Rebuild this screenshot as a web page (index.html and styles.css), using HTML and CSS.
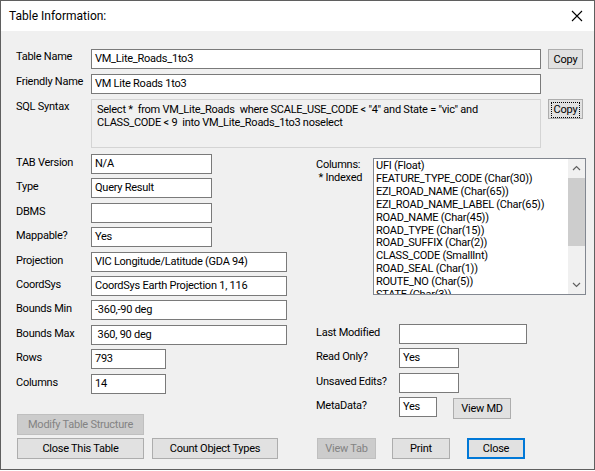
FILE: index.html
```html
<!DOCTYPE html>
<html lang="en">
<head>
    <meta charset="UTF-8">
    <title>Table Information</title>
    <link rel="stylesheet" href="styles.css">
</head>
<body>
    <div class="dialog">
        <div class="titlebar">
            <span class="title">Table Information:</span>
            <svg class="close-x" width="12" height="12" viewBox="0 0 12 12">
                <path d="M1 1 L11 11 M11 1 L1 11" stroke="#000" stroke-width="1.1" fill="none"/>
            </svg>
        </div>
        <div class="content">
            <div class="top">
                <label class="lbl">Table Name</label>
                <div class="field">VM_Lite_Roads_1to3</div>
                <button class="btn copy">Copy</button>

                <label class="lbl">Friendly Name</label>
                <div class="field">VM Lite Roads 1to3</div>
                <span></span>

                <label class="lbl">SQL Syntax</label>
                <div class="sql">Select *&nbsp; from VM_Lite_Roads&nbsp; where SCALE_USE_CODE &lt; "4" and State = "vic" and<br>CLASS_CODE &lt; 9&nbsp; into VM_Lite_Roads_1to3 noselect</div>
                <button class="btn copy focus"><span class="dotted">Copy</span></button>
            </div>

            <div class="middle">
                <div class="left">
                    <div class="rows">
                        <label class="lbl">TAB Version</label><div class="field w120">N/A</div>
                        <label class="lbl">Type</label><div class="field w120">Query Result</div>
                        <label class="lbl">DBMS</label><div class="field w120"></div>
                        <label class="lbl">Mappable?</label><div class="field w120">Yes</div>
                        <label class="lbl">Projection</label><div class="field w195">VIC Longitude/Latitude (GDA 94)</div>
                        <label class="lbl">CoordSys</label><div class="field w195">CoordSys Earth Projection 1, 116</div>
                        <label class="lbl">Bounds Min</label><div class="field w195">-360,-90 deg</div>
                        <label class="lbl">Bounds Max</label><div class="field w195">&nbsp;360, 90 deg</div>
                        <label class="lbl">Rows</label><div class="field w74">793</div>
                        <label class="lbl">Columns</label><div class="field w74">14</div>
                    </div>
                    <button class="btn disabled modify">Modify Table Structure</button>
                </div>

                <div class="right">
                    <div class="columns-block">
                        <div class="col-label">Columns:<br>&nbsp;* Indexed</div>
                        <div class="listbox">
                            <ul class="items">
                                <li>UFI (Float)</li>
                                <li>FEATURE_TYPE_CODE (Char(30))</li>
                                <li>EZI_ROAD_NAME (Char(65))</li>
                                <li>EZI_ROAD_NAME_LABEL (Char(65))</li>
                                <li>ROAD_NAME (Char(45))</li>
                                <li>ROAD_TYPE (Char(15))</li>
                                <li>ROAD_SUFFIX (Char(2))</li>
                                <li>CLASS_CODE (SmallInt)</li>
                                <li>ROAD_SEAL (Char(1))</li>
                                <li>ROUTE_NO (Char(5))</li>
                                <li>STATE (Char(3))</li>
                            </ul>
                            <div class="scrollbar">
                                <svg class="arrow" width="9" height="6" viewBox="0 0 9 6"><path d="M1 5 L4.5 1.5 L8 5" stroke="#606060" stroke-width="1.2" fill="none"/></svg>
                                <div class="track"><div class="thumb"></div></div>
                                <svg class="arrow" width="9" height="6" viewBox="0 0 9 6"><path d="M1 1 L4.5 4.5 L8 1" stroke="#606060" stroke-width="1.2" fill="none"/></svg>
                            </div>
                        </div>
                    </div>
                    <div class="rows right-rows">
                        <label class="lbl">Last Modified</label><div class="field w128"></div>
                        <label class="lbl">Read Only?</label><div class="field w60">Yes</div>
                        <label class="lbl">Unsaved Edits?</label><div class="field w60"></div>
                        <label class="lbl">MetaData?</label>
                        <div class="meta">
                            <div class="field w38">Yes</div>
                            <button class="btn viewmd">View MD</button>
                        </div>
                    </div>
                </div>
            </div>

            <div class="buttons">
                <button class="btn b-close-table">Close This Table</button>
                <button class="btn b-count">Count Object Types</button>
                <button class="btn disabled b-viewtab">View Tab</button>
                <button class="btn b-print">Print</button>
                <button class="btn b-close default">Close</button>
            </div>
        </div>
    </div>
</body>
</html>
```

FILE: styles.css
```css
body {
    margin: 0;
    background-color: #ffffff;
    font-family: "Segoe UI", Roboto, sans-serif;
    font-size: 11px;
    letter-spacing: -0.25px;
    color: #000;
}
.dialog {
    width: 593px;
    height: 468px;
    border: 1px solid #5f5f5f;
    background-color: #f0f0f0;
    display: flex;
    flex-direction: column;
}
.titlebar {
    height: 30px;
    background-color: #ffffff;
    display: flex;
    align-items: center;
    justify-content: space-between;
    padding: 0 11px 0 8px;
}
.title {
    font-size: 12px;
    letter-spacing: 0;
}
.close-x {
    display: block;
}
.content {
    padding: 18px 0 0 15px;
}
.lbl {
    line-height: 15px;
    white-space: nowrap;
}
.field {
    box-sizing: border-box;
    height: 20px;
    background-color: #fff;
    border: 1px solid #7a7a7a;
    padding: 0 3px;
    line-height: 17px;
    white-space: nowrap;
    overflow: hidden;
}
.btn {
    box-sizing: border-box;
    font-family: inherit;
    font-size: 11px;
    letter-spacing: -0.25px;
    color: #000;
    background-color: #e1e1e1;
    border: 1px solid #adadad;
    padding: 0;
    height: 21px;
}
.btn.disabled {
    background-color: #cccccc;
    border-color: #bfbfbf;
    color: #838383;
}
.top {
    display: grid;
    grid-template-columns: 75px 450px 35px;
    column-gap: 0;
    row-gap: 5px;
    grid-template-rows: 20px 20px 49px;
}
.copy {
    width: 35px;
    height: 20px;
    margin-left: 7px;
}
.copy.focus {
    padding: 2px;
}
.dotted {
    display: block;
    border: 1px dotted #000;
    line-height: 14px;
}
.sql {
    box-sizing: border-box;
    border: 1px solid #d4d4d4;
    background-color: #f0f0f0;
    padding: 3px 5px;
    line-height: 13px;
    white-space: nowrap;
}
.middle {
    display: flex;
    margin-top: 6px;
}
.left {
    width: 300px;
}
.rows {
    display: grid;
    grid-template-columns: 75px auto;
    grid-auto-rows: 20px;
    row-gap: 4.4px;
    justify-items: start;
    align-items: start;
}
.rows .lbl {
    padding-top: 1px;
}
.w120 { width: 121px; }
.w195 { width: 196px; }
.w74 { width: 75px; }
.w128 { width: 128px; }
.w60 { width: 60px; }
.w38 { width: 38px; }
.modify {
    width: 127px;
    margin: 20px 0 0 1px;
    display: block;
}
.right {
    width: 270px;
}
.columns-block {
    display: flex;
    margin-top: 4px;
}
.col-label {
    width: 57px;
    line-height: 13px;
    white-space: nowrap;
}
.listbox {
    box-sizing: border-box;
    width: 213px;
    height: 137px;
    border: 1px solid #828790;
    background-color: #fff;
    display: flex;
    overflow: hidden;
}
.items {
    list-style: none;
    margin: 0;
    padding: 1px 0 0 2px;
    flex: 1;
    line-height: 12.9px;
    white-space: nowrap;
    overflow: hidden;
}
.scrollbar {
    width: 17px;
    background-color: #f0f0f0;
    display: flex;
    flex-direction: column;
    align-items: center;
}
.arrow {
    margin: 6px 0;
}
.track {
    flex: 1;
    width: 100%;
    padding-top: 1px;
}
.thumb {
    height: 68px;
    background-color: #cdcdcd;
}
.right-rows {
    grid-template-columns: 83px auto;
    margin-top: 29px;
}
.meta {
    display: flex;
    gap: 16px;
}
.viewmd {
    width: 58px;
    margin-top: 1px;
}
.buttons {
    display: flex;
    margin-top: 3px;
    padding-left: 1px;
}
.buttons .btn {
    height: 21px;
}
.b-close-table { width: 127px; }
.b-count { width: 126px; margin-left: 8px; }
.b-viewtab { width: 59px; margin-left: 39px; }
.b-print { width: 58px; margin-left: 16px; }
.b-close { width: 58px; margin-left: 17px; }
.btn.default {
    border: 2px solid #0078d7;
}
```
